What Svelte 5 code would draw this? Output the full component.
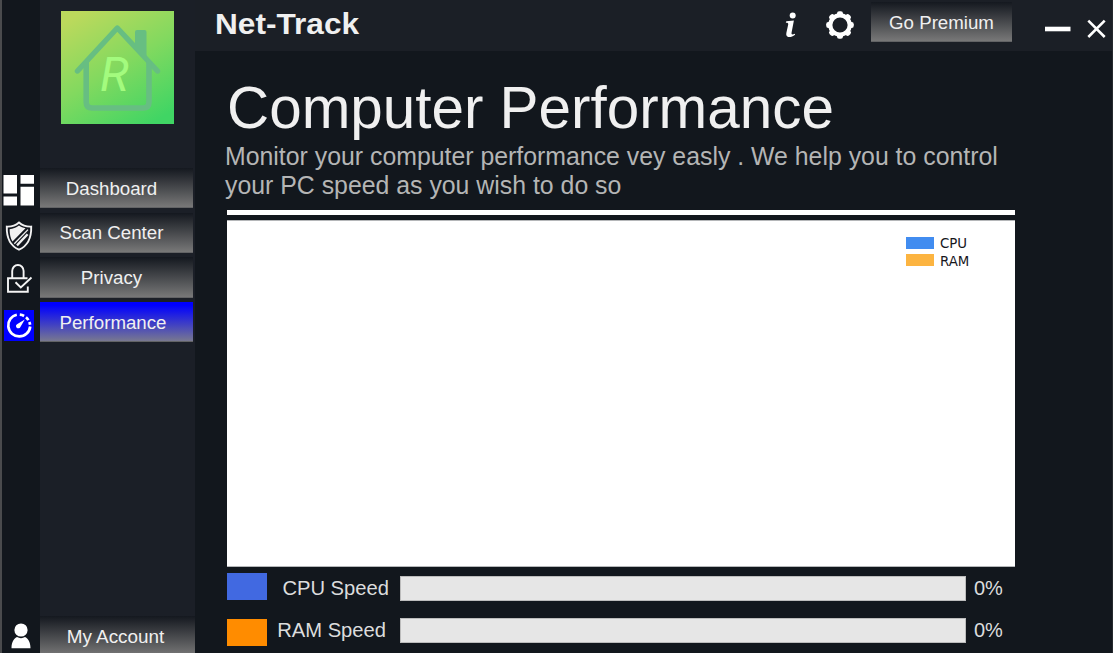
<script>
  const items = ['Dashboard', 'Scan Center', 'Privacy', 'Performance'];
  const meters = [
    { name: 'CPU', color: '#4169e1', value: 0 },
    { name: 'RAM', color: '#ff8c00', value: 0 }
  ];
  let active = $state('Performance');
</script>

<div class="window">
  <div class="rail">
    <svg class="i-dash" width="32" height="32" viewBox="0 0 32 32" fill="#fff">
      <path d="M.5 1H14v18.500H.5zM.5 22.500H14v9H.5zM17.500 1H31v8.700H17.500zM17.500 12.700H31V31.500H17.500z" />
    </svg>
    <svg class="i-shield" width="28" height="30" viewBox="0 0 28 30">
      <path d="M14 1.500C10.500 4.600 6 5.800 1.800 5.600 1.500 16 4.500 24.500 14 28.700 23.500 24.500 26.500 16 26.200 5.600 22 5.800 17.500 4.600 14 1.500z" fill="#14181f" stroke="#f2f2f2" stroke-width="1.900" />
      <path d="M14 4.600C11 6.900 8 8 4.600 8.200 4.600 13 5.500 17.500 7.500 20.500L20.500 7.200C18 6.800 15.800 6 14 4.600z" fill="#f2f2f2" />
      <path d="M9.300 22.800 23 8.600" stroke="#f2f2f2" stroke-width="1.300" />
      <path d="M12 24.400 22.600 13.200" stroke="#f2f2f2" stroke-width="2.300" />
    </svg>
    <svg class="i-lock" width="28" height="32" viewBox="0 0 28 32" fill="none" stroke="#f4f4f4" stroke-width="1.900">
      <path d="M6.200 15V8a5.700 6 0 0 1 11.400 0v7" />
      <path d="M21.500 15.300H2v13.500h19.800v-5.300" />
      <path d="M9.500 19.300l5.300 5.200L25.500 14.500" />
    </svg>
    <div class="gauge">
      <svg width="30" height="31" viewBox="0 0 30 31" fill="none" stroke="#fff">
        <path d="M12.800 4.700A11 11 0 1 0 26.200 16.500" stroke-width="2.700" />
        <path d="M15.800 4.700a11 11 0 0 1 4.300 1.300M22 7.200a11 11 0 0 1 2.400 2.900M25.300 12a11 11 0 0 1 .8 2.800" stroke-width="2.700" />
        <path d="M20.800 9.400 13.400 13.900a2.300 2.300 0 1 0 3 3z" fill="#fff" stroke="none" />
      </svg>
    </div>
    <svg class="i-user" width="20" height="26" viewBox="0 0 20 26" fill="#fff">
      <circle cx="10" cy="7" r="6.600" />
      <path d="M.5 25.200C.5 18.500 3.500 15.200 6 14c2.500 1.500 5.500 1.500 8 0 2.500 1.200 5.500 4.500 5.500 11.200z" />
    </svg>
  </div>

  <aside>
    <svg class="logo" width="113" height="113" viewBox="0 0 113 113">
      <defs>
        <linearGradient id="lg" x1="0.200" y1="0" x2="0.800" y2="1">
          <stop offset="0" stop-color="#bcd95c" />
          <stop offset="0.500" stop-color="#82d95f" />
          <stop offset="1" stop-color="#40d564" />
        </linearGradient>
      </defs>
      <rect width="113" height="113" fill="url(#lg)" />
      <g fill="none" stroke="#67be82" stroke-linecap="round" stroke-linejoin="round">
        <path d="M16.500 60 56.300 17 96.500 60" stroke-width="5.400" />
        <path d="M25.200 50V91q0 6 6 6H82q6 0 6-6V50" stroke-width="5.600" stroke-linecap="butt" />
      </g>
      <path d="M74 38V21q0-2 2-2h7.500q2 0 2 2V50z" fill="#67be82" />
      <text x="39" y="80">R</text>
    </svg>
    <nav>
      {#each items as item}
        <button class:active={active === item} onclick={() => (active = item)}>{item}</button>
      {/each}
    </nav>
    <button class="account">My Account</button>
  </aside>

  <div class="content">
    <header>
      <span class="brand">Net-Track</span>
      <svg class="info" width="12" height="26" viewBox="0 0 12 26" fill="#fff">
        <circle cx="7.700" cy="3.600" r="3" />
        <path d="M1.300 9.300 8.900 8.500 6.600 20.500c-.4 2 .6 2.400 3.200 1.200l.3 1.100C7.500 24.800 5 25.400 3.200 24.900 1.200 24.400 1 22.800 1.400 20.800L3.200 12.500C3.500 11 2.500 10.500.8 10.700z" />
      </svg>
      <svg class="gear" width="28" height="28" viewBox="-14 -14 28 28">
        <circle r="9.700" fill="none" stroke="#fff" stroke-width="4.200" />
        <g fill="#fff">
          {#each [0, 45, 90, 135, 180, 225, 270, 315] as angle}
            <rect x="-3" y="-13.800" width="6" height="5" rx="2.200" transform="rotate({angle})" />
          {/each}
        </g>
      </svg>
      <button class="premium">Go Premium</button>
      <svg class="winctl" width="62" height="22" viewBox="0 0 62 22" fill="none" stroke="#fff">
        <path d="M0 11h25.500" stroke-width="4.600" />
        <path d="M43.300 2.700 59.700 19M59.700 2.700 43.300 19" stroke-width="2.600" />
      </svg>
    </header>

    <main>
      <h1>Computer Performance</h1>
      <p>Monitor your computer performance vey easly . We help you to control<br />your PC speed as you wish to do so</p>
      <div class="rule"></div>
      <div class="chart">
        <ul>
          <li><i class="cpu"></i><span>CPU</span></li>
          <li><i class="ram"></i><span>RAM</span></li>
        </ul>
      </div>
      {#each meters as m}
        <div class="meter {m.name.toLowerCase()}-row">
          <span class="swatch" style:background={m.color}></span>
          <span class="name">{m.name} Speed</span>
          <span class="track"><span class="fill" style:width="{m.value}%" style:background={m.color}></span></span>
          <span class="value">{m.value}%</span>
        </div>
      {/each}
    </main>
  </div>
</div>

<style>
  .window {
    box-sizing: border-box;
    display: flex;
    width: 1113px;
    height: 653px;
    overflow: hidden;
    background: #12171d;
    border-left: 2px solid #4a4b4d;
    border-right: 1px solid #25292e;
    font-family: "Liberation Sans", Arial, sans-serif;
    color: #f0f0f0;
  }
  svg { display: block; flex: none; }
  .rail {
    box-sizing: border-box;
    width: 38px;
    padding: 174px 0 4px 1px;
    display: flex;
    flex-direction: column;
    flex: none;
  }
  .i-shield { margin: 15px 0 0 2px; }
  .i-lock { margin: 12px 0 0 3px; }
  .gauge { margin: 15px 0 0 1px; width: 30px; height: 31px; background: #00f; }
  .i-user { margin: auto 0 0 8px; }
  aside {
    width: 155px;
    display: flex;
    flex-direction: column;
    flex: none;
    background: #1b1f27;
  }
  .logo { margin: 11px 0 0 21px; }
  .logo text { font: italic 48px Roboto, sans-serif; fill: #a3fb7e; }
  nav { margin-top: 44px; display: flex; flex-direction: column; gap: 4.500px; }
  button {
    box-sizing: border-box;
    border: 0;
    margin: 0;
    padding: 2px 10px 0 0;
    width: 153px;
    height: 40.200px;
    font: 18.700px "Liberation Sans", Arial, sans-serif;
    color: #f0f0f0;
    background: linear-gradient(#14181f, #787878);
    border-bottom: 1px solid #626365;
  }
  button.active { padding-right: 7px; background: linear-gradient(#00f 8%, #787890); }
  .account { width: 155px; height: 41px; margin: auto 0 -4px; padding: 1px 4px 0 0; flex: none; font-size: 18.900px; }
  .content { flex: 1; min-width: 0; }
  header {
    display: flex;
    align-items: flex-start;
    height: 51px;
    background: #1b1f26;
  }
  .brand {
    width: 570px;
    padding-left: 20px;
    box-sizing: border-box;
    flex: none;
    font-weight: bold;
    font-size: 29px;
    line-height: 34px;
    margin-top: 7px;
    transform: scaleX(1.090);
    transform-origin: 20px 0;
  }
  .info { margin: 12px 0 0 20px; }
  .gear { margin: 11px 0 0 29px; }
  .premium { width: 141px; height: 40px; padding: 2px 0 0; margin: 2px 0 0 17px; flex: none; }
  .winctl { margin: 18px 0 0 33px; }
  main { padding: 0 0 0 32px; }
  h1 {
    margin: 23px 0 0;
    font-size: 58.400px;
    line-height: 68px;
    font-weight: normal;
    white-space: nowrap;
  }
  p {
    margin: 0 0 0 -2px;
    font-size: 24.850px;
    line-height: 29px;
    color: #b4b5b5;
    white-space: nowrap;
  }
  .rule { margin-top: 10px; width: 788px; height: 5px; background: #fff; }
  .chart {
    box-sizing: border-box;
    margin-top: 5px;
    width: 788px;
    height: 347px;
    background: #fff;
    border: 1px solid #b5b7b9;
    border-width: 1px 0;
    display: flex;
    justify-content: flex-end;
  }
  ul { list-style: none; margin: 13px 44px 0 0; padding: 0; }
  li {
    display: flex;
    align-items: center;
    height: 17.500px;
    width: 65px;
    gap: 6px;
    font: 14.800px/17.500px "DejaVu Sans Condensed", "DejaVu Sans", sans-serif;
    color: #16161c;
  }
  li i { width: 28px; height: 12px; flex: none; }
  .cpu { background: #418cf0; }
  .ram { background: #fcb441; }
  .meter { display: flex; align-items: center; height: 42.500px; font-size: 20.200px; color: #dcdddd; }
  .swatch { width: 40px; height: 27px; }
  .cpu-row .swatch { margin-bottom: 4px; }
  .ram-row .swatch { margin-top: 4px; }
  .name { width: 133px; box-sizing: border-box; text-align: right; }
  .cpu-row .name { padding-right: 11px; }
  .ram-row .name { padding-right: 14px; }
  .track {
    box-sizing: border-box;
    width: 566px;
    height: 25px;
    background: #e6e6e6;
    border: 1px solid #bcbcbc;
  }
  .fill { display: block; height: 100%; }
  .value { margin-left: 8px; font-size: 20px; }
</style>
